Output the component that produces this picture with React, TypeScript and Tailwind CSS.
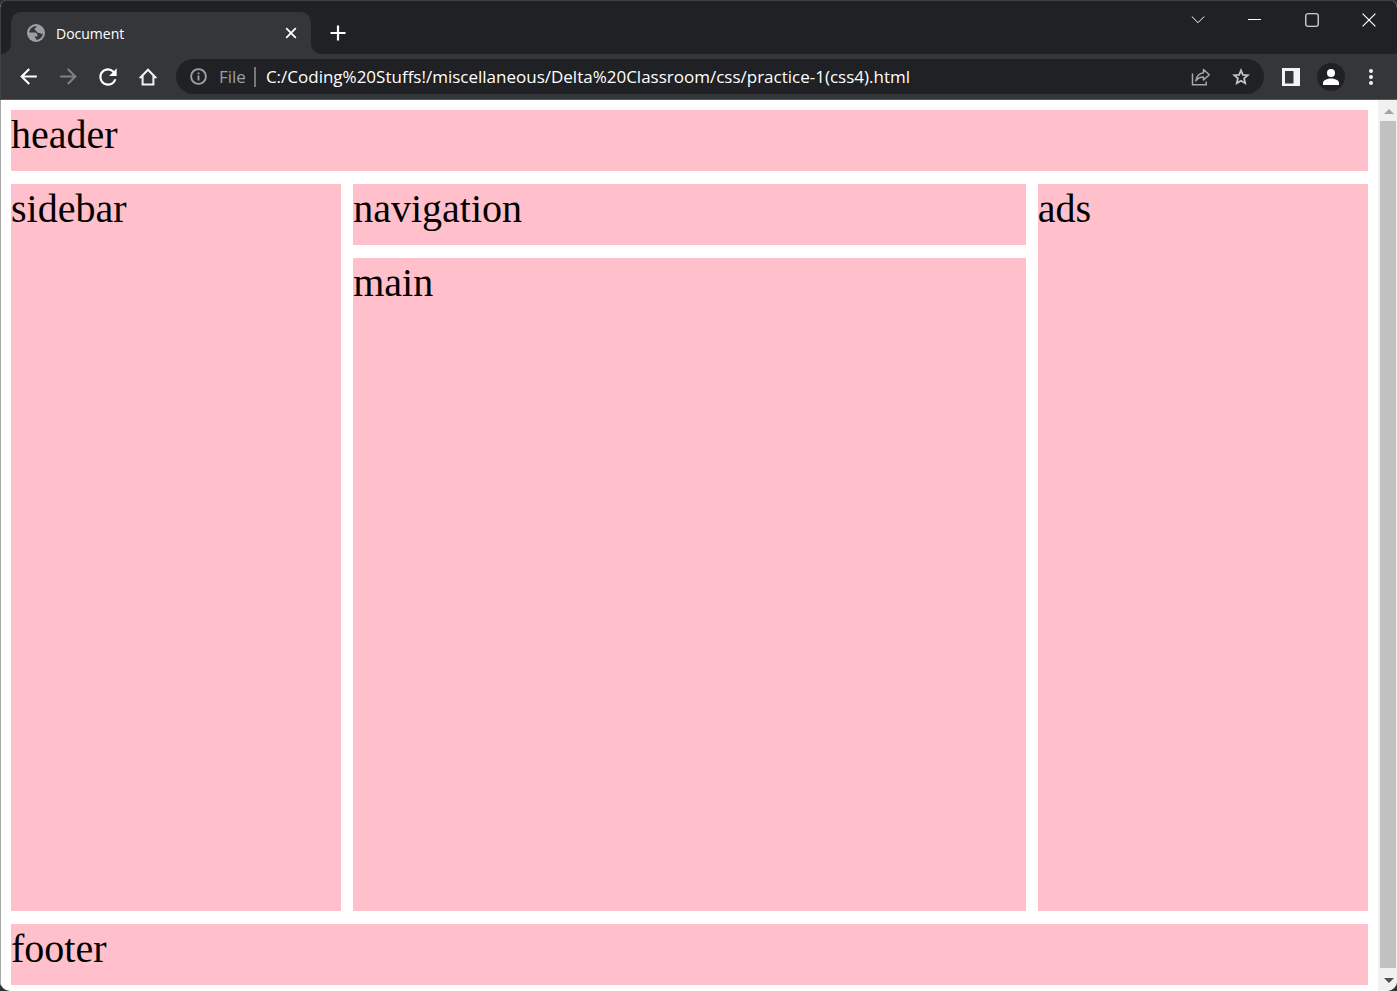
import React from "react";
import { MdArrowBack, MdArrowForward, MdRefresh } from "react-icons/md";

const toolButton = "flex h-10 w-10 shrink-0 items-center justify-center";
const windowButton = "flex h-[38px] w-[57px] shrink-0 items-center justify-center text-white";

function GlobeIcon() {
  return (
    <svg width="18" height="18" viewBox="0 0 18 18" aria-hidden="true" className="shrink-0">
      <circle cx="9" cy="9" r="9" fill="#9aa0a6" />
      <path
        d="M2.300 8.600C2.500 5.300 4.800 2.800 9.600 2.100 9.200 3.300 8.900 3.800 8.200 4.200 7.200 4.800 7.400 6.200 8.600 6.400 9.700 6.500 9.500 7.600 10 8.200 10.700 9 12.200 8.500 13 9.300 13.800 10.100 15 10 15.800 9.200 15.700 12.800 13.200 15.600 9.200 15.800V14.500C8.200 14.300 7.800 13.500 7.900 12.400H10.600C11 10.400 9.600 8.700 7.400 8.600Z"
        fill="#35363a"
      />
    </svg>
  );
}

function TitleBar() {
  return (
    <div className="flex h-[54px] items-end justify-between border-t border-[#3f403f] bg-[#202124]">
      <div className="flex items-end">
        <div className="h-[10px] w-[10px] bg-[#35363a]">
          <div className="h-full w-full rounded-br-[10px] bg-[#202124]" />
        </div>
        <div className="flex h-[42px] w-[300px] items-center rounded-t-[10px] bg-[#35363a] pr-2 pl-4">
          <GlobeIcon />
          <span className="ml-[11px] flex-1 text-[14px] text-white">Document</span>
          <button aria-label="Close tab" className="flex h-6 w-6 items-center justify-center text-white">
            <svg width="12" height="12" viewBox="0 0 12 12" fill="none" stroke="currentColor" strokeWidth="1.8">
              <path d="M1.2 1.2 10.8 10.8M10.8 1.2 1.2 10.8" />
            </svg>
          </button>
        </div>
        <div className="h-[10px] w-[10px] bg-[#35363a]">
          <div className="h-full w-full rounded-bl-[10px] bg-[#202124]" />
        </div>
        <button aria-label="New tab" className="ml-px flex h-[43px] w-8 items-center justify-center text-white">
          <svg width="16" height="16" viewBox="0 0 16 16" fill="none" stroke="currentColor" strokeWidth="2.2">
            <path d="M8 .5v15M.5 8h15" />
          </svg>
        </button>
      </div>
      <div className="flex self-start">
        <button aria-label="Search tabs" className={windowButton}>
          <svg width="14" height="14" viewBox="0 0 14 14" fill="none" stroke="currentColor">
            <path d="M.8 3.500 7 9.700 13.200 3.500" />
          </svg>
        </button>
        <button aria-label="Minimize" className={windowButton}>
          <svg width="13" height="13" viewBox="0 0 13 13" stroke="currentColor">
            <path d="M0 5.500h13" />
          </svg>
        </button>
        <button aria-label="Maximize" className={windowButton}>
          <svg width="14" height="14" viewBox="0 0 14 14" fill="none" stroke="currentColor" strokeWidth="1.1">
            <rect x=".8" y=".8" width="12.4" height="12.4" rx="1.8" />
          </svg>
        </button>
        <button aria-label="Close window" className={windowButton}>
          <svg width="14" height="14" viewBox="0 0 14 14" fill="none" stroke="currentColor" strokeWidth="1.2">
            <path d="M.6.6 13.4 13.4M13.4.6.6 13.4" />
          </svg>
        </button>
      </div>
    </div>
  );
}

function Toolbar() {
  return (
    <div className="flex h-[46px] items-center border-b border-[#5a5b5e] bg-[#35363a] pr-[6px] pl-[7px] text-white">
      <button aria-label="Back" className={toolButton}><MdArrowBack size={25} /></button>
      <button aria-label="Forward" className={`${toolButton} text-[#808184]`}><MdArrowForward size={25} /></button>
      <button aria-label="Reload" className={toolButton}><MdRefresh size={26} /></button>
      <button aria-label="Home" className={toolButton}>
        <svg width="18" height="18" viewBox="0 0 18 18" fill="#f1f3f4">
          <path fillRule="evenodd" d="M9 .3.2 9.300V10.200H2.600V17.500H15.400V10.200H17.800V9.300ZM9 3.200 13.400 7.700V15.500H4.600V7.700Z" />
        </svg>
      </button>
      <div className="ml-2 flex h-[35px] min-w-0 flex-1 items-center rounded-full bg-[#202124] pr-[3px] pl-[14px] text-[17px]">
        <svg width="17" height="17" viewBox="0 0 17 17" fill="none" stroke="#9aa0a6" strokeWidth="1.9" aria-hidden="true" className="shrink-0">
          <circle cx="8.500" cy="8.500" r="7.400" />
          <path d="M8.500 7.600v5M8.500 4.400v1.900" />
        </svg>
        <label htmlFor="address" className="ml-3 text-[#9aa0a6]">File</label>
        <span className="mx-2 h-5 w-[2px] shrink-0 bg-[#77787b]" />
        <input
          id="address"
          type="text"
          defaultValue="C:/Coding%20Stuffs!/miscellaneous/Delta%20Classroom/css/practice-1(css4).html"
          className="ml-[2px] min-w-0 flex-1 bg-transparent text-white outline-none"
        />
        <button aria-label="Share" className={`${toolButton} text-[#a5a6a8]`}>
          <svg width="20" height="18" viewBox="0 0 20 18" fill="none" stroke="currentColor" strokeWidth="1.5">
            <path d="M1.500 5.500v11.300h13.700v-3.300" />
            <path d="M12.500 1.500 18.300 6.800 12.500 12V9C9 9 6.700 10.200 4.900 12.800 5.500 8.500 8 5.300 12.500 4.700Z" strokeLinejoin="round" />
          </svg>
        </button>
        <button aria-label="Bookmark this page" className={`${toolButton} text-[#c3c4c6]`}>
          <svg width="18" height="18" viewBox="0 0 18 18" fill="none" stroke="currentColor" strokeWidth="1.8">
            <path d="M9 2.300 10.900 6.800 15.800 7.200 12.100 10.400 13.200 15.200 9 12.700 4.800 15.200 5.900 10.400 2.200 7.200 7.100 6.800Z" />
          </svg>
        </button>
      </div>
      <button aria-label="Side panel" className={`${toolButton} ml-[7px]`}>
        <svg width="18" height="18" viewBox="0 0 18 18" fill="#f1f3f4">
          <path fillRule="evenodd" d="M0 0h18v18H0zM3 3v12.500H11.500V3z" />
        </svg>
      </button>
      <button aria-label="Profile" className={toolButton}>
        <svg width="28" height="28" viewBox="0 0 28 28">
          <circle cx="14" cy="14" r="14" fill="#202124" />
          <circle cx="14" cy="10" r="4" fill="#fff" />
          <path d="M6 22v-2c0-3 4.500-4.600 8-4.600s8 1.600 8 4.600v2z" fill="#fff" />
        </svg>
      </button>
      <button aria-label="Menu" className={toolButton}>
        <svg width="4" height="16" viewBox="0 0 4 16" fill="#f1f3f4">
          <circle cx="2" cy="2" r="2" /><circle cx="2" cy="8" r="2" /><circle cx="2" cy="14" r="2" />
        </svg>
      </button>
    </div>
  );
}

function PageContent() {
  return (
    <div className="grid flex-1 grid-cols-4 grid-rows-[61px_61px_1fr_61px] gap-x-3 gap-y-[13px] px-[10px] pt-[10px] pb-[6px] font-['Liberation_Serif',serif] text-[40px] leading-[50px] text-black">
      <header className="col-span-4 bg-[#ffc0cb]">header</header>
      <aside className="row-span-2 bg-[#ffc0cb]">sidebar</aside>
      <nav className="col-span-2 bg-[#ffc0cb]">navigation</nav>
      <aside className="row-span-2 bg-[#ffc0cb]">ads</aside>
      <main className="col-span-2 bg-[#ffc0cb]">main</main>
      <footer className="col-span-4 bg-[#ffc0cb]">footer</footer>
    </div>
  );
}

function ScrollBar() {
  return (
    <div aria-hidden="true" className="flex w-[19px] shrink-0 flex-col items-center bg-[#f1f1f1]">
      <div className="flex h-[21px] items-center justify-center pt-[2px] pl-[2px]">
        <svg width="10" height="5" viewBox="0 0 10 5" fill="#a3a3a3"><path d="M0 5 5 0 10 5z" /></svg>
      </div>
      <div className="ml-[1px] w-4 flex-1 bg-[#c1c1c1]" />
      <div className="flex h-[23px] items-center justify-center pt-[2px] pl-[2px]">
        <svg width="10" height="5" viewBox="0 0 10 5" fill="#505050"><path d="M0 0 5 5 10 0z" /></svg>
      </div>
    </div>
  );
}

export default function App() {
  return (
    <div className="min-h-screen bg-[#303030] font-['Open_Sans',sans-serif]">
      <div className="flex min-h-screen flex-col overflow-hidden rounded-t-lg rounded-b-[10px] bg-white">
        <div className="border-l border-[#3f403f]">
          <TitleBar />
          <Toolbar />
        </div>
        <div className="flex flex-1 border-l border-[#a8a8a8]">
          <PageContent />
          <ScrollBar />
        </div>
      </div>
    </div>
  );
}
